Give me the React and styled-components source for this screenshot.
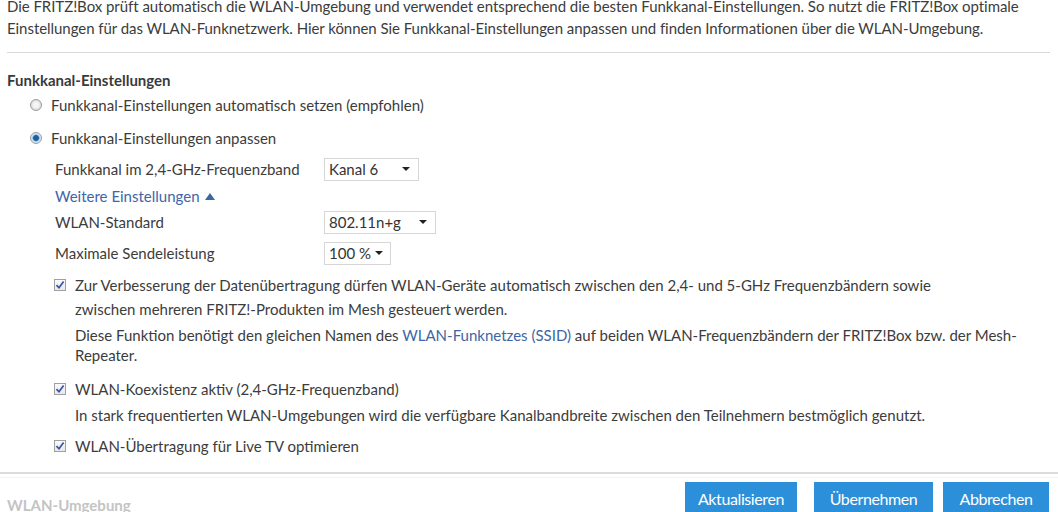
import React from "react";
import styled, { createGlobalStyle } from "styled-components";

const Global = createGlobalStyle`
  html, body { margin: 0; padding: 0; background: #fff; }
  body {
    font-family: "Lato", "Noto Sans", sans-serif;
    font-size: 15px;
    color: #3c3c3c;
    overflow: hidden;
  }
  * { box-sizing: border-box; }
`;

const Page = styled.div`
  width: 1058px;
  height: 512px;
  overflow: hidden;
  display: flex;
  flex-direction: column;
`;

const Content = styled.div`
  padding: 0 8px 0 7px;
  flex: 1;
`;

const Intro = styled.p`
  margin: -5px 0 0;
  line-height: 22px;
  letter-spacing: -0.05px;
`;

const Divider = styled.div`
  height: 1px;
  background: #d8d8d8;
  margin-top: 13px;
`;

const Heading = styled.h2`
  margin: 17px 0 0;
  font-size: 15px;
  font-weight: 700;
  line-height: 20px;
  color: #3a3a3a;
`;

const RadioRow = styled.label`
  display: flex;
  align-items: center;
  gap: 9px;
  margin-left: 23px;
  height: 20px;
  margin-top: ${(p) => p.$mt}px;
`;

const Radio = styled.span`
  width: 12px;
  height: 12px;
  border-radius: 50%;
  border: 1px solid #9c9c9c;
  background: radial-gradient(circle, ${(p) => (p.$on ? "#1f5fa0 0 2.5px, #5aa3e0 3px, #d8e6f2 4px" : "#f6f6f6 0 2px, #dedede 5px")});
  flex: none;
`;

const Settings = styled.div`
  margin-left: 48px;
`;

const FieldRow = styled.div`
  display: grid;
  grid-template-columns: 269px auto;
  align-items: center;
  height: 24px;
  margin-top: ${(p) => p.$mt}px;
`;

const Select = styled.div`
  width: ${(p) => p.$w}px;
  height: 23px;
  border: 1px solid #d6d6d6;
  background: #fff;
  display: flex;
  align-items: center;
  justify-content: space-between;
  gap: 4px;
  padding: 0 8px 0 4px;
  font-size: 15px;
  color: #333;
  white-space: nowrap;
`;

const Caret = styled.span`
  flex: none;
  width: 0;
  height: 0;
  border-left: 4px solid transparent;
  border-right: 4px solid transparent;
  border-top: 4px solid #222;
`;

const MoreLink = styled.a`
  display: flex;
  align-items: center;
  gap: 5px;
  color: #3d66a6;
  text-decoration: none;
  height: 20px;
  margin-top: 5px;
`;

const Up = styled.span`
  width: 0;
  height: 0;
  border-left: 5px solid transparent;
  border-right: 5px solid transparent;
  border-bottom: 7px solid #3d66a6;
`;

const CheckRow = styled.div`
  display: grid;
  grid-template-columns: 21px 1fr;
  margin-left: 47px;
  margin-top: ${(p) => p.$mt}px;
  line-height: 24px;
`;

const Box = styled.span`
  width: 12px;
  height: 12px;
  margin-top: 6px;
  border: 1px solid #a0a0a0;
  background: linear-gradient(#fafafa, #e8e8e8);
  display: flex;
  align-items: center;
  justify-content: center;
`;

const CheckText = styled.div``;

const Label = styled.div`
  max-width: ${(p) => p.$max || 2000}px;
`;

const Note = styled.div`
  margin-top: ${(p) => p.$mt || 2}px;
  line-height: ${(p) => p.$lh || 20}px;
`;

const Link = styled.span`
  color: #3d66a6;
`;

const Footer = styled.div`
  border-top: 2px solid #dcdcdc;
  display: flex;
  align-items: flex-end;
  justify-content: space-between;
  padding: 0 9px 0 7px;
  height: 40px;
  position: relative;
  &::before {
    content: "";
    position: absolute;
    left: 0;
    right: 0;
    top: 3px;
    height: 1px;
    background: #f2f2f2;
  }
`;

const Faded = styled.div`
  font-weight: 700;
  font-size: 15px;
  color: #c4c4c4;
  margin-bottom: -2px;
`;

const Buttons = styled.div`
  display: flex;
  gap: 17px;
  margin-bottom: -12px;
`;

const Button = styled.button`
  width: ${(p) => p.$w}px;
  height: 42px;
  border: none;
  background: #2b8fda;
  color: #fff;
  font-family: "Lato", sans-serif;
  font-size: 16px;
  letter-spacing: -0.4px;
  padding: 0 0 10px;
  &:nth-child(3) { margin-left: -7px; }
`;

const Check = () => (
  <svg width="10" height="10" viewBox="0 0 10 10">
    <path d="M1.5 5.2 L4 7.8 L8.6 1.6" fill="none" stroke="#3552a8" strokeWidth="1.7" />
  </svg>
);

export default function App() {
  return (
    <Page>
      <Global />
      <Content>
        <Intro>
          Die FRITZ!Box prüft automatisch die WLAN-Umgebung und verwendet entsprechend die besten Funkkanal-Einstellungen. So nutzt die FRITZ!Box optimale Einstellungen für das WLAN-Funknetzwerk. Hier können Sie Funkkanal-Einstellungen anpassen und finden Informationen über die WLAN-Umgebung.
        </Intro>
        <Divider />
        <Heading>Funkkanal-Einstellungen</Heading>
        <RadioRow $mt={5}>
          <Radio />
          Funkkanal-Einstellungen automatisch setzen (empfohlen)
        </RadioRow>
        <RadioRow $mt={13}>
          <Radio $on />
          Funkkanal-Einstellungen anpassen
        </RadioRow>
        <Settings>
          <FieldRow $mt={9}>
            <span>Funkkanal im 2,4-GHz-Frequenzband</span>
            <Select $w={95}>Kanal 6<Caret /></Select>
          </FieldRow>
          <MoreLink>Weitere Einstellungen<Up /></MoreLink>
          <FieldRow $mt={4}>
            <span>WLAN-Standard</span>
            <Select $w={112}>802.11n+g<Caret /></Select>
          </FieldRow>
          <FieldRow $mt={7}>
            <span>Maximale Sendeleistung</span>
            <Select $w={67}>100&nbsp;%<Caret /></Select>
          </FieldRow>
        </Settings>
        <CheckRow $mt={8}>
          <Box><Check /></Box>
          <CheckText>
            <Label $max={870}>
              Zur Verbesserung der Datenübertragung dürfen WLAN-Geräte automatisch zwischen den 2,4- und 5-GHz Frequenzbändern sowie zwischen mehreren FRITZ!-Produkten im Mesh gesteuert werden.
            </Label>
            <Note $mt={4}>
              Diese Funktion benötigt den gleichen Namen des <Link>WLAN-Funknetzes (SSID)</Link> auf beiden WLAN-Frequenzbändern der FRITZ!Box bzw. der Mesh-Repeater.
            </Note>
          </CheckText>
        </CheckRow>
        <CheckRow $mt={12}>
          <Box><Check /></Box>
          <CheckText>
            <Label>WLAN-Koexistenz aktiv (2,4-GHz-Frequenzband)</Label>
            <Note $mt={2} $lh={24}>
              In stark frequentierten WLAN-Umgebungen wird die verfügbare Kanalbandbreite zwischen den Teilnehmern bestmöglich genutzt.
            </Note>
          </CheckText>
        </CheckRow>
        <CheckRow $mt={7}>
          <Box><Check /></Box>
          <CheckText>
            <Label>WLAN-Übertragung für Live TV optimieren</Label>
          </CheckText>
        </CheckRow>
      </Content>
      <Footer>
        <Faded>WLAN-Umgebung</Faded>
        <Buttons>
          <Button $w={112}>Aktualisieren</Button>
          <Button $w={119}>Übernehmen</Button>
          <Button $w={106}>Abbrechen</Button>
        </Buttons>
      </Footer>
    </Page>
  );
}
